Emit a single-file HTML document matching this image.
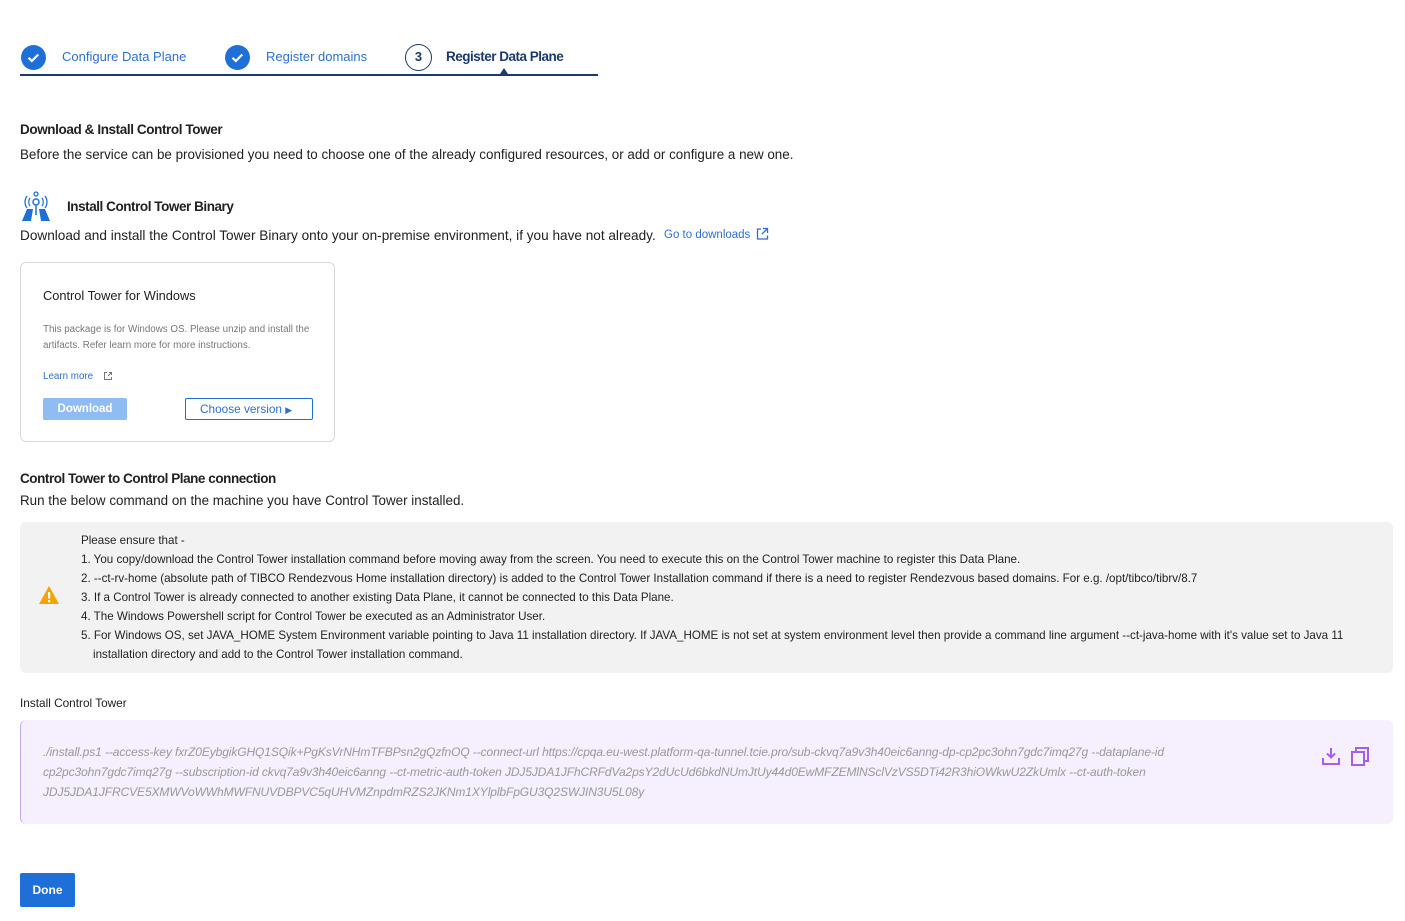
<!DOCTYPE html>
<html><head><meta charset="utf-8"><style>
*{margin:0;padding:0;box-sizing:border-box}
body{width:1405px;height:921px;background:#fff;font-family:"Liberation Sans",sans-serif;color:#212121;position:relative;overflow:hidden}
.a{position:absolute;white-space:nowrap}
.chk{position:absolute;width:25px;height:25px;border-radius:50%;background:#1f6fd8}
.stp{font-size:13px;color:#2e6fd0}
.warn div{white-space:nowrap}
</style></head><body>
<div class="chk" style="left:21px;top:45px"><svg width="25" height="25"><path d="M7.5 12.8l3.3 3.2 6.5-6.5" stroke="#fff" stroke-width="2.2" fill="none"/></svg></div>
<div class="a stp" style="left:62px;top:49px">Configure Data Plane</div>
<div class="chk" style="left:225px;top:45px"><svg width="25" height="25"><path d="M7.5 12.8l3.3 3.2 6.5-6.5" stroke="#fff" stroke-width="2.2" fill="none"/></svg></div>
<div class="a stp" style="left:266px;top:49px">Register domains</div>
<div class="a" style="left:405px;top:44px;width:27px;height:27px;border:1.5px solid #1b3a6b;border-radius:50%;font-size:13px;font-weight:bold;text-align:center;line-height:24px;color:#1b3a6b">3</div>
<div class="a" style="left:446px;top:49px;font-size:13.5px;font-weight:bold;color:#1b3a6b;letter-spacing:-0.5px">Register Data Plane</div>
<div class="a" style="left:20px;top:74px;width:578px;height:1.5px;background:#1b3a6b"></div>
<div class="a" style="left:500px;top:68px;width:0;height:0;border-left:4px solid transparent;border-right:4px solid transparent;border-bottom:6px solid #1b3a6b"></div>

<div class="a" style="left:20px;top:122px;font-size:13.5px;font-weight:bold;letter-spacing:-0.4px">Download &amp; Install Control Tower</div>
<div class="a" style="left:20px;top:147px;font-size:13.4px">Before the service can be provisioned you need to choose one of the already configured resources, or add or configure a new one.</div>

<svg class="a" style="left:20px;top:191px" width="34" height="32" viewBox="0 0 34 32"><circle cx="16" cy="3" r="2" fill="none" stroke="#1f6fd8" stroke-width="1.3"/><circle cx="16" cy="11" r="3" fill="none" stroke="#1f6fd8" stroke-width="1.5"/><path d="M10 7a7 7 0 0 0 0 8M7 5a10 10 0 0 0 0 12M22 7a7 7 0 0 1 0 8M25 5a10 10 0 0 1 0 12" stroke="#1f6fd8" stroke-width="1.3" fill="none"/><path d="M2 30l5-12h6l-2 12zM30 30l-5-12h-6l2 12z" fill="#1f6fd8"/><path d="M16 14v10" stroke="#1f6fd8" stroke-width="1.5"/></svg>
<div class="a" style="left:67px;top:199px;font-size:13.5px;font-weight:bold;letter-spacing:-0.45px">Install Control Tower Binary</div>
<div class="a" style="left:20px;top:228px;font-size:13.6px">Download and install the Control Tower Binary onto your on-premise environment, if you have not already.</div>
<div class="a" style="left:664px;top:229px;font-size:11.5px;color:#2e6fd0">Go to downloads</div>
<svg class="a" style="left:756px;top:227px" width="13" height="13"><path d="M5 2H1.5v10h10V8.5M7 1.5h4.5V6M11.5 1.5L6 7" stroke="#2e6fd0" stroke-width="1.3" fill="none"/></svg>

<div class="a" style="left:20px;top:262px;width:315px;height:180px;border:1px solid #d9d9d9;border-radius:6px"></div>
<div class="a" style="left:43px;top:288px;font-size:12.8px">Control Tower for Windows</div>
<div class="a" style="left:43px;top:322px;font-size:9.8px;color:#777;line-height:16px">This package is for Windows OS. Please unzip and install the<br>artifacts. Refer learn more for more instructions.</div>
<div class="a" style="left:43px;top:371px;font-size:9.8px;color:#2e6fd0">Learn more</div>
<svg class="a" style="left:103px;top:371px" width="10" height="10"><path d="M4 1.5H1.5v7h7V6M6 1.5h2.5V4M8.5 1.5L5 5" stroke="#777" stroke-width="1" fill="none"/></svg>
<div class="a" style="left:43px;top:398px;width:84px;height:22px;background:#8fbcf2;border-radius:2px;color:#fff;font-size:11.5px;font-weight:bold;text-align:center;line-height:22px">Download</div>
<div class="a" style="left:185px;top:398px;width:128px;height:22px;border:1px solid #1f6fd8;border-radius:2px;color:#2e6fd0;font-size:11.8px;line-height:20px;padding-left:14px">Choose version <span style="font-size:9px">&#9654;</span></div>

<div class="a" style="left:20px;top:471px;font-size:13.5px;font-weight:bold;letter-spacing:-0.45px">Control Tower to Control Plane connection</div>
<div class="a" style="left:20px;top:493px;font-size:13.4px">Run the below command on the machine you have Control Tower installed.</div>

<div class="a" style="left:20px;top:522px;width:1373px;height:151px;background:#f2f2f2;border-radius:6px"></div>
<svg class="a" style="left:38px;top:585px" width="22" height="20"><path d="M11 1L21 19H1z" fill="#f5a300"/><rect x="10" y="7" width="2.2" height="6.5" fill="#fff"/><rect x="10" y="15" width="2.2" height="2.2" fill="#fff"/></svg>
<div class="a warn" style="left:81px;top:531px;font-size:11.6px;line-height:19px;color:#222">
<div>Please ensure that -</div>
<div>1. You copy/download the Control Tower installation command before moving away from the screen. You need to execute this on the Control Tower machine to register this Data Plane.</div>
<div>2. --ct-rv-home (absolute path of TIBCO Rendezvous Home installation directory) is added to the Control Tower Installation command if there is a need to register Rendezvous based domains. For e.g. /opt/tibco/tibrv/8.7</div>
<div>3. If a Control Tower is already connected to another existing Data Plane, it cannot be connected to this Data Plane.</div>
<div>4. The Windows Powershell script for Control Tower be executed as an Administrator User.</div>
<div>5. For Windows OS, set JAVA_HOME System Environment variable pointing to Java 11 installation directory. If JAVA_HOME is not set at system environment level then provide a command line argument --ct-java-home with it's value set to Java 11</div>
<div style="padding-left:12px">installation directory and add to the Control Tower installation command.</div>
</div>

<div class="a" style="left:20px;top:696px;font-size:11.8px">Install Control Tower</div>
<div class="a" style="left:20px;top:720px;width:1373px;height:104px;background:#f5effe;border-radius:6px;border-left:1.5px solid #c9a8f2"></div>
<div class="a" style="left:43px;top:742px;font-size:12px;font-style:italic;color:#999;line-height:20px;letter-spacing:-0.1px">./install.ps1 --access-key fxrZ0EybgikGHQ1SQik+PgKsVrNHmTFBPsn2gQzfnOQ --connect-url https://cpqa.eu-west.platform-qa-tunnel.tcie.pro/sub-ckvq7a9v3h40eic6anng-dp-cp2pc3ohn7gdc7imq27g --dataplane-id<br>cp2pc3ohn7gdc7imq27g --subscription-id ckvq7a9v3h40eic6anng --ct-metric-auth-token JDJ5JDA1JFhCRFdVa2psY2dUcUd6bkdNUmJtUy44d0EwMFZEMlNSclVzVS5DTi42R3hiOWkwU2ZkUmlx --ct-auth-token<br>JDJ5JDA1JFRCVE5XMWVoWWhMWFNUVDBPVC5qUHVMZnpdmRZS2JKNm1XYlplbFpGU3Q2SWJIN3U5L08y</div>
<svg class="a" style="left:1321px;top:746px" width="20" height="20"><path d="M10 2v9M6 7.5l4 4 4-4M2 12v6h16v-6" stroke="#a45ef0" stroke-width="2" fill="none"/></svg>
<svg class="a" style="left:1350px;top:746px" width="22" height="22"><rect x="2" y="6" width="12" height="13" stroke="#a45ef0" stroke-width="2" fill="none"/><path d="M6 6V2h12v13h-4" stroke="#a45ef0" stroke-width="2" fill="none"/></svg>

<div class="a" style="left:20px;top:873px;width:55px;height:34px;background:#1f6fd8;border-radius:2px;color:#fff;font-size:12px;font-weight:bold;text-align:center;line-height:34px">Done</div>
</body></html>
